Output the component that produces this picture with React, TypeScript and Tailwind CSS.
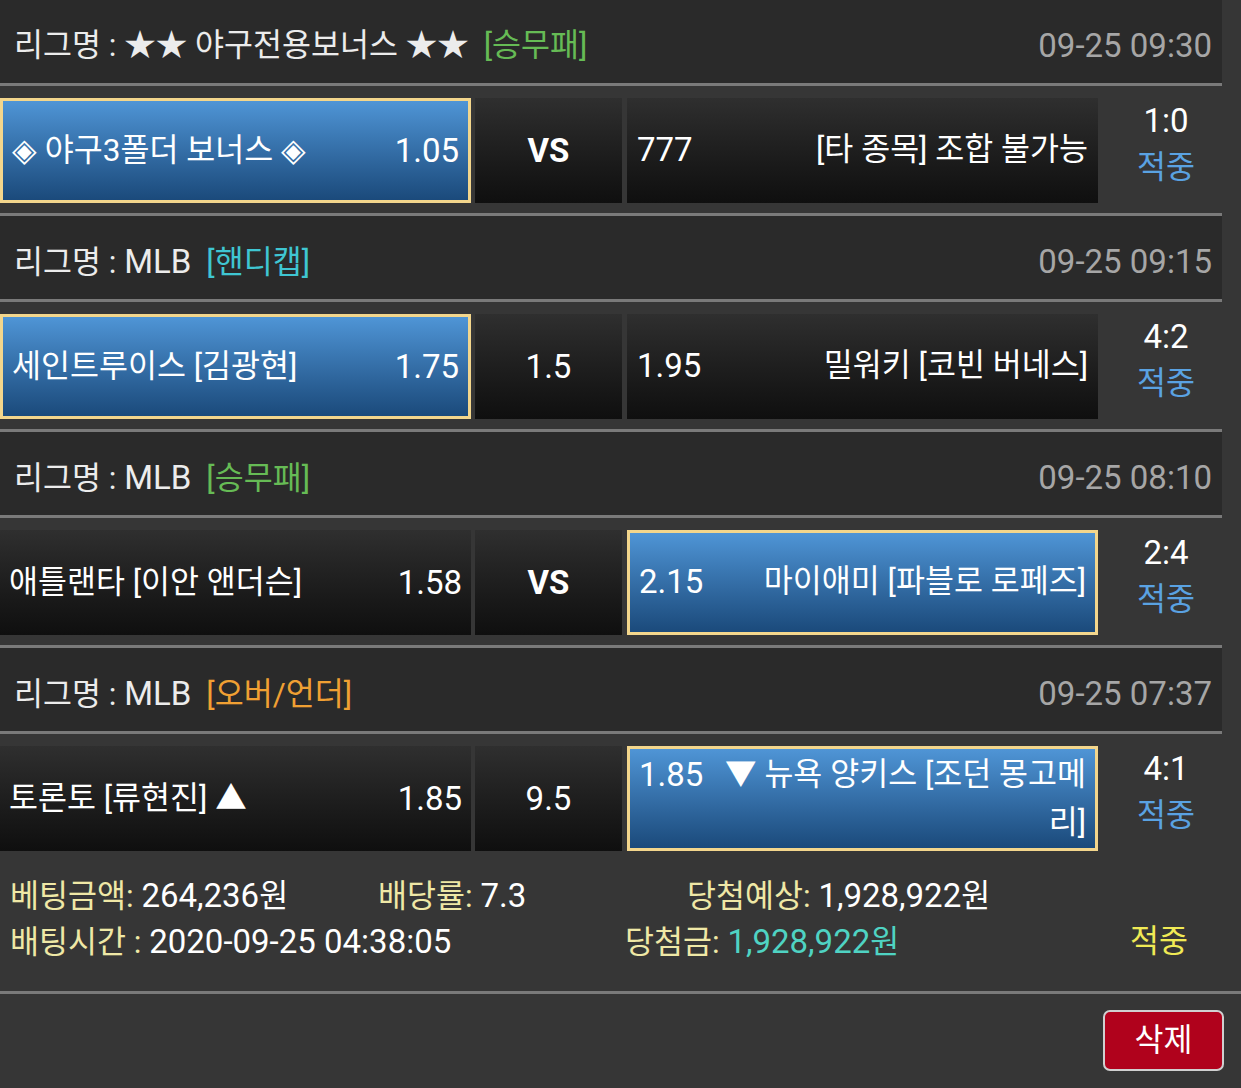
import React from 'react';

type Side = { name: React.ReactNode; odds: string; picked?: boolean };

interface Match {
  league: React.ReactNode;
  tag: string;
  tagColor: string;
  time: string;
  home: Side;
  mid: string;
  midBold?: boolean;
  away: Side;
  score: string;
}

// latin digits render a bit wider than the hangul in the original
function N({ children }: { children: React.ReactNode }) {
  return <span className="text-[33px]">{children}</span>;
}

const matches: Match[] = [
  {
    league: '★★ 야구전용보너스 ★★',
    tag: '[승무패]',
    tagColor: 'text-[#66bb55]',
    time: '09-25 09:30',
    home: { name: '◈ 야구3폴더 보너스 ◈', odds: '1.05', picked: true },
    mid: 'VS',
    midBold: true,
    away: { name: '[타 종목] 조합 불가능', odds: '777' },
    score: '1:0',
  },
  {
    league: <N>MLB</N>,
    tag: '[핸디캡]',
    tagColor: 'text-[#3fc6d2]',
    time: '09-25 09:15',
    home: { name: '세인트루이스 [김광현]', odds: '1.75', picked: true },
    mid: '1.5',
    away: { name: '밀워키 [코빈 버네스]', odds: '1.95' },
    score: '4:2',
  },
  {
    league: <N>MLB</N>,
    tag: '[승무패]',
    tagColor: 'text-[#66bb55]',
    time: '09-25 08:10',
    home: { name: '애틀랜타 [이안 앤더슨]', odds: '1.58' },
    mid: 'VS',
    midBold: true,
    away: { name: '마이애미 [파블로 로페즈]', odds: '2.15', picked: true },
    score: '2:4',
  },
  {
    league: <N>MLB</N>,
    tag: '[오버/언더]',
    tagColor: 'text-[#f0a033]',
    time: '09-25 07:37',
    home: { name: '토론토 [류현진] ▲', odds: '1.85' },
    mid: '9.5',
    away: { name: '▼ 뉴욕 양키스 [조던 몽고메리]', odds: '1.85', picked: true },
    score: '4:1',
  },
];

const cellBase = 'h-[105px] shrink-0 flex items-center';
const dark = 'bg-gradient-to-b from-[#2f2f2f] to-[#0f0f0f]';
const picked = 'border-[3px] border-[#f3d68c] bg-gradient-to-b from-[#4f95d6] to-[#1b4a7b]';

function Separator() {
  return <div className="h-[3px] bg-[#7a7a7a]" />;
}

function MatchBlock({ m, last }: { m: Match; last: boolean }) {
  return (
    <div>
      <div className="h-[83px] bg-[#2a2a2a] flex items-center justify-between pt-[9px] pl-[14px] pr-[10px]">
        <div className="text-[#ececec]">
          리그명 : {m.league}
          <span className={`ml-[15px] ${m.tagColor}`}>{m.tag}</span>
        </div>
        <div className="text-[#a6a6a6]">
          <N>{m.time}</N>
        </div>
      </div>
      <Separator />
      <div className={`flex items-start pt-[12px] ${last ? 'pb-[2px]' : 'pb-[10px]'}`}>
        <div
          className={`${cellBase} w-[471px] justify-between px-[9px] ${m.home.picked ? picked : dark}`}
        >
          <span>{m.home.name}</span>
          <N>{m.home.odds}</N>
        </div>
        <div className={`${cellBase} ${dark} ml-[4px] w-[147px] justify-center ${m.midBold ? 'font-bold' : ''}`}>
          <N>{m.mid}</N>
        </div>
        <div
          className={`${cellBase} ml-[5px] w-[471px] ${
            m.away.picked ? `${picked} px-[9px]` : `${dark} px-[10px]`
          }`}
        >
          <div className="w-full text-right leading-[48px]">
            <span className="float-left mr-[20px]">
              <N>{m.away.odds}</N>
            </span>
            {m.away.name}
          </div>
        </div>
        <div className="flex-1 flex flex-col items-center pl-[12px] leading-[46px]">
          <span className="text-white">
            <N>{m.score}</N>
          </span>
          <span className="text-[#5aa2e2]">적중</span>
        </div>
      </div>
      {!last && <Separator />}
    </div>
  );
}

export default function App() {
  return (
    <div className="w-[1241px] min-h-[1088px] bg-[#363636] text-white text-[31.5px] font-[family-name:Roboto,'Noto_Sans_CJK_KR',sans-serif]">
      <div className="w-[1222px]">
        {matches.map((m, i) => (
          <MatchBlock key={i} m={m} last={i === matches.length - 1} />
        ))}
      </div>

      {/* Summary */}
      <div className="pt-[20px] pb-[26px] pl-[10px] leading-[45px]">
        <div className="flex">
          <div className="w-[368px]">
            <span className="text-[#efe8a6]">베팅금액:</span> <N>264,236</N>원
          </div>
          <div className="w-[309px]">
            <span className="text-[#efe8a6]">배당률:</span> <N>7.3</N>
          </div>
          <div>
            <span className="text-[#efe8a6]">당첨예상:</span> <N>1,928,922</N>원
          </div>
        </div>
        <div className="flex">
          <div className="w-[615px]">
            <span className="text-[#efe8a6]">배팅시간 :</span> <N>2020-09-25 04:38:05</N>
          </div>
          <div className="w-[505px]">
            <span className="text-[#efe8a6]">당첨금:</span>{' '}
            <span className="text-[#4fd3c3]">
              <N>1,928,922</N>원
            </span>
          </div>
          <div className="text-[#f0ea55]">적중</div>
        </div>
      </div>
      <Separator />

      <div className="flex justify-end pt-[16px] pr-[17px] pb-[17px]">
        <button className="w-[121px] h-[61px] rounded-[7px] border-2 border-[#d0d0d0] bg-[#b0021c] text-white text-[31.5px] flex items-center justify-center">
          삭제
        </button>
      </div>
    </div>
  );
}
